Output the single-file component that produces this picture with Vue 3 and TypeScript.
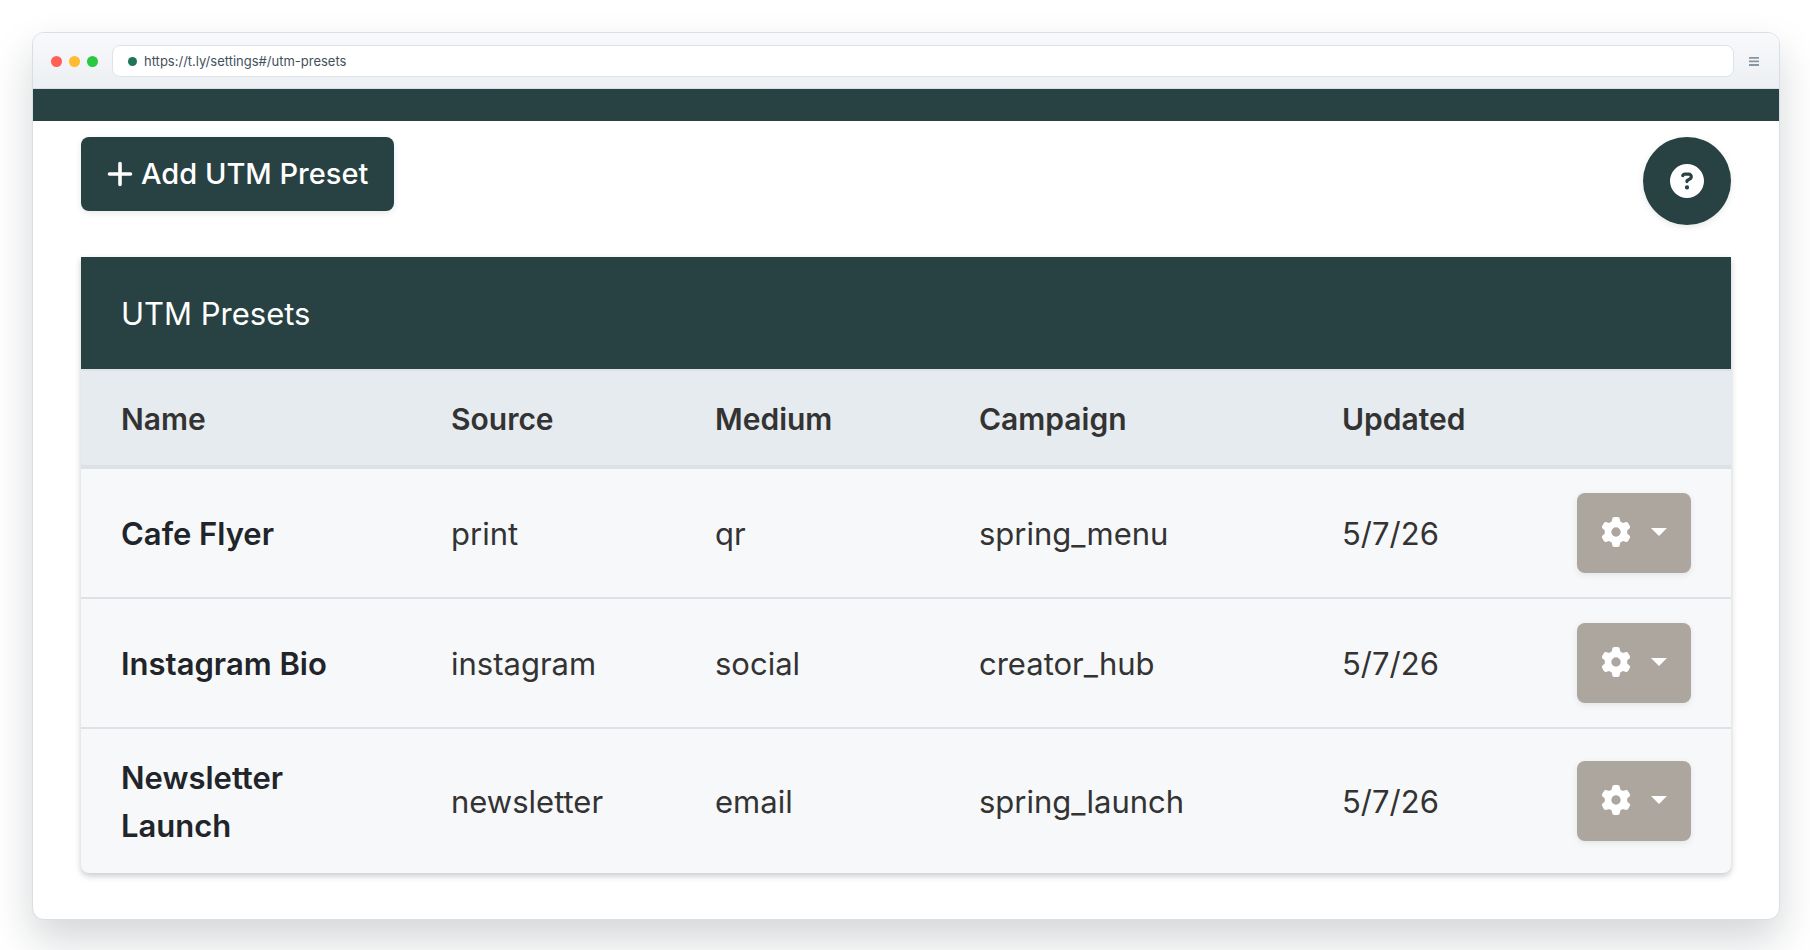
<script setup lang="ts">
interface Preset {
  name: string
  source: string
  medium: string
  campaign: string
  updated: string
}

const presets: Preset[] = [
  { name: 'Cafe Flyer', source: 'print', medium: 'qr', campaign: 'spring_menu', updated: '5/7/26' },
  { name: 'Instagram Bio', source: 'instagram', medium: 'social', campaign: 'creator_hub', updated: '5/7/26' },
  { name: 'Newsletter Launch', source: 'newsletter', medium: 'email', campaign: 'spring_launch', updated: '5/7/26' },
]

const gearPath =
  'M495.9 166.6c3.2 8.7 .5 18.4-6.4 24.6l-43.3 39.4c1.1 8.3 1.7 16.8 1.7 25.4s-.6 17.1-1.7 25.4l43.3 39.4c6.9 6.2 9.6 15.9 6.4 24.6c-4.4 11.9-9.7 23.3-15.8 34.3l-4.7 8.1c-6.6 11-14 21.4-22.1 31.2c-5.9 7.2-15.7 9.6-24.5 6.8l-55.7-17.7c-13.4 10.3-28.2 18.9-44 25.4l-12.5 57.1c-2 9.1-9 16.3-18.2 17.8c-13.8 2.3-28 3.5-42.5 3.5s-28.7-1.2-42.5-3.5c-9.2-1.5-16.2-8.7-18.2-17.8l-12.5-57.1c-15.8-6.5-30.6-15.1-44-25.4L83.1 425.9c-8.8 2.8-18.6 .3-24.5-6.8c-8.1-9.8-15.5-20.2-22.1-31.2l-4.7-8.1c-6.1-11-11.4-22.4-15.8-34.3c-3.2-8.7-.5-18.4 6.4-24.6l43.3-39.4C64.6 273.1 64 264.6 64 256s.6-17.1 1.7-25.4L22.4 191.2c-6.9-6.2-9.6-15.9-6.4-24.6c4.4-11.9 9.7-23.3 15.8-34.3l4.7-8.1c6.6-11 14-21.4 22.1-31.2c5.9-7.2 15.7-9.6 24.5-6.8l55.7 17.7c13.4-10.3 28.2-18.9 44-25.4l12.5-57.1c2-9.1 9-16.3 18.2-17.8C227.3 1.2 241.5 0 256 0s28.7 1.2 42.5 3.5c9.2 1.5 16.2 8.7 18.2 17.8l12.5 57.1c15.8 6.5 30.6 15.1 44 25.4l55.7-17.7c8.8-2.8 18.6-.3 24.5 6.8c8.1 9.8 15.5 20.2 22.1 31.2l4.7 8.1c6.1 11 11.4 22.4 15.8 34.3zM256 336a80 80 0 1 0 0-160 80 80 0 1 0 0 160z'
</script>

<template>
  <div class="stage">
    <div class="window">
      <header class="chrome">
        <div class="lights" aria-hidden="true">
          <span class="light red"></span>
          <span class="light amber"></span>
          <span class="light green"></span>
        </div>
        <label class="address">
          <span class="site-dot" aria-hidden="true"></span>
          <input class="url" type="text" aria-label="Address" value="https://t.ly/settings#/utm-presets" />
        </label>
        <button class="menu" type="button" aria-label="Browser menu">
          <svg width="13" height="12" viewBox="0 0 13 12" aria-hidden="true">
            <path d="M1 2.8h10M1 6.4h10M1 10h10" stroke="#8696a2" stroke-width="1.8" />
          </svg>
        </button>
      </header>
      <div class="band"></div>

      <main class="page">
        <div class="toolbar">
          <button class="add" type="button">
            <svg width="26" height="26" viewBox="0 0 26 26" aria-hidden="true">
              <path d="M13 2.5v21M2.5 13h21" stroke="currentColor" stroke-width="3.6" stroke-linecap="round" />
            </svg>
            Add UTM Preset
          </button>
          <button class="help" type="button" aria-label="Help">
            <svg width="34" height="34" viewBox="0 0 512 512" aria-hidden="true">
              <path
                fill="currentColor"
                d="M256 512A256 256 0 1 0 256 0a256 256 0 1 0 0 512zM169.8 165.3c7.9-22.3 29.1-37.3 52.8-37.3h58.3c34.9 0 63.1 28.3 63.1 63.1c0 22.6-12.1 43.5-31.7 54.8L280 264.4c-.2 13-10.9 23.6-24 23.6c-13.3 0-24-10.7-24-24V250.5c0-8.6 4.6-16.5 12.1-20.8l44.3-25.4c4.7-2.7 7.6-7.7 7.6-13.1c0-8.4-6.8-15.1-15.1-15.1H222.6c-3.4 0-6.4 2.1-7.5 5.3l-.4 1.2c-4.4 12.5-18.2 19-30.6 14.6s-19-18.2-14.6-30.6l.4-1.2zM224 352a32 32 0 1 1 64 0 32 32 0 1 1 -64 0z"
              />
            </svg>
          </button>
        </div>

        <section class="card">
          <h2 class="title">UTM Presets</h2>
          <table>
            <colgroup>
              <col class="c-name" />
              <col class="c-source" />
              <col class="c-source" />
              <col class="c-campaign" />
              <col class="c-updated" />
              <col class="c-actions" />
            </colgroup>
            <thead>
              <tr>
                <th scope="col">Name</th>
                <th scope="col">Source</th>
                <th scope="col">Medium</th>
                <th scope="col">Campaign</th>
                <th scope="col">Updated</th>
                <th scope="col" aria-label="Actions"></th>
              </tr>
            </thead>
            <tbody>
              <tr v-for="preset in presets" :key="preset.name">
                <td class="name">{{ preset.name }}</td>
                <td>{{ preset.source }}</td>
                <td>{{ preset.medium }}</td>
                <td>{{ preset.campaign }}</td>
                <td>{{ preset.updated }}</td>
                <td class="actions">
                  <button class="options" type="button" :aria-label="`Options for ${preset.name}`">
                    <svg width="30" height="30" viewBox="0 0 512 512" aria-hidden="true">
                      <path fill="currentColor" :d="gearPath" />
                    </svg>
                    <svg width="16" height="8" viewBox="0 0 16 8" aria-hidden="true">
                      <path fill="currentColor" d="M0 0h16L8 8z" />
                    </svg>
                  </button>
                </td>
              </tr>
            </tbody>
          </table>
        </section>
      </main>
    </div>
  </div>
</template>

<style>
body {
  margin: 0;
  background: #fff;
}
</style>

<style scoped>
.stage {
  box-sizing: border-box;
  min-height: 100vh;
  padding: 32px 30px 30px 32px;
  overflow: hidden;
  font-family: Inter, "Liberation Sans", sans-serif;
  color: #333;
}

.window {
  border: 1px solid #d8dee6;
  border-radius: 12px;
  overflow: hidden;
  background: #fff;
  box-shadow: 0 20px 42px rgba(15, 30, 40, 0.18);
}

button {
  margin: 0;
  border: 0;
  font: inherit;
  cursor: pointer;
}

svg {
  display: block;
  flex: none;
}

.chrome {
  display: flex;
  align-items: center;
  gap: 14px;
  padding: 12px 18px 11px;
  border-bottom: 1px solid #d8dee6;
  background: linear-gradient(#f8f9fb, #eceff3);
}

.lights {
  display: flex;
  gap: 7px;
}

.light {
  width: 11px;
  height: 11px;
  border-radius: 50%;
}

.red {
  background: #ff5f57;
}

.amber {
  background: #febc2e;
}

.green {
  background: #28c840;
}

.address {
  display: flex;
  flex: 1;
  align-items: center;
  gap: 7px;
  box-sizing: border-box;
  height: 32px;
  padding: 0 15px;
  border: 1px solid #dde3ea;
  border-radius: 8px;
  background: #fff;
}

.site-dot {
  width: 9px;
  height: 9px;
  border-radius: 50%;
  background: #1f7558;
}

.url {
  flex: 1;
  min-width: 0;
  padding: 0;
  border: 0;
  outline: 0;
  background: none;
  color: #44515c;
  font: 13px/20px Inter, "Liberation Sans", sans-serif;
}

.menu {
  padding: 0;
  background: none;
}

.band {
  height: 32px;
  background: #284142;
}

.page {
  padding: 16px 48px 46px;
}

.toolbar {
  display: flex;
  align-items: flex-start;
  justify-content: space-between;
  margin-bottom: 32px;
}

.add {
  display: flex;
  align-items: center;
  gap: 8px;
  padding: 14px 26px;
  border-radius: 8px;
  background: #284142;
  color: #fff;
  font-size: 29px;
  font-weight: 500;
  line-height: 46px;
  box-shadow: 0 2px 6px rgba(40, 65, 66, 0.12);
}

.help {
  display: flex;
  align-items: center;
  justify-content: center;
  width: 88px;
  height: 88px;
  padding: 0;
  border-radius: 50%;
  background: #284142;
  color: #fff;
  box-shadow: 0 2px 6px rgba(40, 65, 66, 0.12);
}

.card {
  overflow: hidden;
  border-radius: 0 0 8px 8px;
  background: #f7f8fa;
  box-shadow: 0 3px 6px rgba(20, 40, 40, 0.24);
}

.title {
  margin: 0;
  padding: 33px 40px 31px;
  background: #284142;
  color: #fff;
  font-size: 31px;
  font-weight: 400;
  line-height: 48px;
}

table {
  width: 100%;
  border-spacing: 0;
  table-layout: fixed;
}

.c-name {
  width: 20%;
}

.c-source {
  width: 16%;
}

.c-campaign {
  width: 22%;
}

.c-updated {
  width: 14%;
}

.c-actions {
  width: 12%;
}

th,
td {
  padding: 25px 40px 23px;
  border-top: 2px solid #dee2e8;
  text-align: left;
  vertical-align: middle;
}

th {
  border-bottom: 4px solid #dde0e6;
  background: #e6ebef;
  font-size: 30px;
  font-weight: 600;
  line-height: 46px;
}

td {
  font-size: 31px;
  line-height: 48px;
}

tbody tr:first-child td {
  border-top: 0;
}

.name {
  color: #212529;
  font-weight: 600;
}

.actions {
  padding: 24px 40px 24px 0;
}

.options {
  display: flex;
  align-items: center;
  gap: 20px;
  height: 80px;
  margin-left: auto;
  padding: 0 24px 2px;
  border-radius: 8px;
  background: #ada69e;
  color: #fff;
  box-shadow: 0 2px 6px rgba(40, 65, 66, 0.1);
}
</style>
